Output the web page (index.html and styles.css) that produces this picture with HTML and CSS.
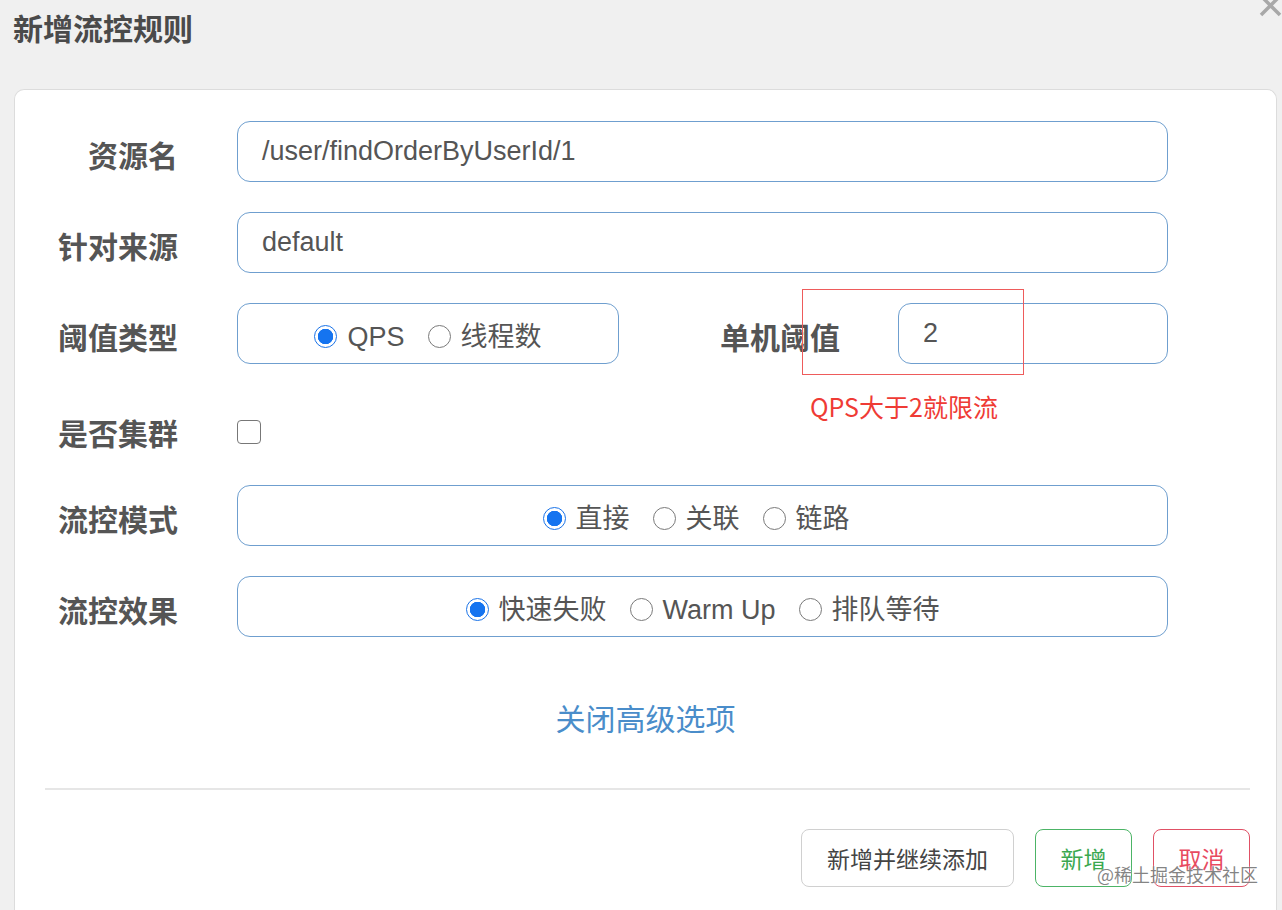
FILE: index.html
```html
<!DOCTYPE html>
<html lang="zh">
<head>
<meta charset="utf-8">
<title>新增流控规则</title>
<link rel="stylesheet" href="styles.css">
</head>
<body>
<header class="head">
  <h1 class="title">新增流控规则</h1>
  <svg class="close" width="24" height="20" viewBox="0 0 24 20"><path d="M3 -4 L22 15 M22 -4 L3 15" stroke="#a8a8a8" stroke-width="3.5" fill="none"/></svg>
</header>
<main class="panel">
  <form class="form">
    <div class="row">
      <label class="lbl">资源名</label>
      <div class="field grow"><span class="val">/user/findOrderByUserId/1</span></div>
    </div>
    <div class="row">
      <label class="lbl">针对来源</label>
      <div class="field grow"><span class="val">default</span></div>
    </div>
    <div class="row">
      <label class="lbl">阈值类型</label>
      <div class="field radios small">
        <span class="radio on"></span><span class="rtext">QPS</span>
        <span class="radio"></span><span class="rtext">线程数</span>
      </div>
      <label class="lbl lbl2">单机阈值</label>
      <div class="field grow"><span class="val">2</span></div>
    </div>
    <div class="row row-check">
      <label class="lbl">是否集群</label>
      <span class="check"></span>
    </div>
    <div class="row">
      <label class="lbl">流控模式</label>
      <div class="field radios grow mode">
        <span class="radio on"></span><span class="rtext">直接</span>
        <span class="radio"></span><span class="rtext">关联</span>
        <span class="radio"></span><span class="rtext">链路</span>
      </div>
    </div>
    <div class="row">
      <label class="lbl">流控效果</label>
      <div class="field radios grow">
        <span class="radio on"></span><span class="rtext">快速失败</span>
        <span class="radio"></span><span class="rtext">Warm Up</span>
        <span class="radio"></span><span class="rtext">排队等待</span>
      </div>
    </div>
  </form>
  <div class="linkrow"><a class="link">关闭高级选项</a></div>
  <hr class="sep">
  <div class="actions">
    <button class="btn" type="button">新增并继续添加</button>
    <button class="btn btn-ok" type="button">新增</button>
    <button class="btn btn-cancel" type="button">取消</button>
  </div>
  <div class="note-box"></div>
  <div class="note-text">QPS大于2就限流</div>
  <div class="watermark">@稀土掘金技术社区</div>
</main>
</body>
</html>
```

FILE: styles.css
```css
html, body {
  margin: 0;
  padding: 0;
  height: 100%;
  overflow: hidden;
}
body {
  background: #f0f0f0;
  font-family: "Liberation Sans", "Noto Sans CJK SC", sans-serif;
  color: #555;
  position: relative;
}
.head {
  height: 89px;
  position: relative;
}
.title {
  margin: 0;
  padding: 10px 0 0 13px;
  font-family: "Noto Sans CJK SC", sans-serif;
  font-size: 30px;
  line-height: 34px;
  font-weight: 700;
  color: #4a4a4a;
}
.close {
  position: absolute;
  right: 0;
  top: 0;
}
.panel {
  position: relative;
  margin: 0 5px 0 14px;
  height: calc(100% - 89px);
  box-sizing: border-box;
  background: #fff;
  border: 1px solid #dcdcdc;
  border-bottom: 0;
  border-radius: 10px 10px 0 0;
  padding-top: 31px;
}
.form {
  display: flex;
  flex-direction: column;
  gap: 30px;
  margin-right: 108px;
}
.row {
  display: flex;
  align-items: center;
  height: 61px;
  box-sizing: border-box;
}
.lbl {
  width: 163px;
  flex: none;
  text-align: right;
  font-family: "Noto Sans CJK SC", sans-serif;
  font-weight: 700;
  font-size: 30px;
  line-height: 36px;
  color: #555;
  padding-top: 5px;
  margin-right: 59px;
}
.lbl2 {
  width: 221px;
  margin-right: 58px;
}
.field {
  height: 61px;
  box-sizing: border-box;
  border: 1.5px solid #6f9fcf;
  border-radius: 13px;
  display: flex;
  align-items: center;
  padding-left: 24px;
}
.grow { flex: 1; }
.small { width: 382px; flex: none; }
.val {
  font-size: 27px;
  color: #555;
}
.radios {
  justify-content: center;
  padding-left: 0;
  padding-top: 6px;
}
.mode { padding-right: 13px; }
.radio {
  width: 23px;
  height: 23px;
  box-sizing: border-box;
  border: 1px solid #7a7a7a;
  border-radius: 50%;
  background: #fff;
  flex: none;
  margin-right: 10px;
}
.radio.on {
  border: 1.5px solid #1a73e8;
  background: radial-gradient(circle, #1574f0 0 7.5px, #fff 8px);
}
.rtext {
  font-size: 27px;
  line-height: 34px;
  color: #555;
  margin-right: 23px;
}
.rtext:last-child { margin-right: 0; }
.row-check { padding-top: 14px; }
.row-check .lbl { padding-top: 0; }
.check {
  width: 24px;
  height: 24px;
  box-sizing: border-box;
  border: 1.5px solid #777;
  border-radius: 4px;
}
.linkrow {
  text-align: center;
  margin-top: 62px;
  height: 36px;
}
.link {
  font-family: "Noto Sans CJK SC", sans-serif;
  font-size: 30px;
  line-height: 36px;
  color: #4a8dca;
}
.sep {
  margin: 53px 26px 0 30px;
  border: 0;
  height: 2px;
  background: #e6e6e6;
}
.actions {
  display: flex;
  justify-content: flex-end;
  gap: 21px;
  margin: 39px 26px 0 0;
}
.btn {
  height: 58px;
  box-sizing: border-box;
  background: #fff;
  border: 1.5px solid #d0d0d0;
  border-radius: 8px;
  font-family: "Noto Sans CJK SC", sans-serif;
  font-size: 23px;
  color: #444;
  padding: 0 25px;
}
.btn-ok {
  width: 97px;
  padding: 0;
  border-color: #4cb466;
  color: #3aa84f;
}
.btn-cancel {
  width: 97px;
  padding: 0;
  border-color: #e05065;
  color: #e84a5f;
}
.note-box {
  position: absolute;
  left: 787px;
  top: 199px;
  width: 222px;
  height: 86px;
  box-sizing: border-box;
  border: 1.5px solid #ee5b5b;
}
.note-text {
  position: absolute;
  left: 795px;
  top: 302px;
  font-family: "Noto Sans CJK SC", sans-serif;
  font-size: 25px;
  line-height: 28px;
  color: #ef3b35;
}
.watermark {
  position: absolute;
  left: 1082px;
  top: 772px;
  font-family: "Noto Sans CJK SC", sans-serif;
  font-size: 18px;
  line-height: 24px;
  color: rgba(110, 110, 110, 0.85);
  text-shadow: 0 0 2px #fff;
}
```
